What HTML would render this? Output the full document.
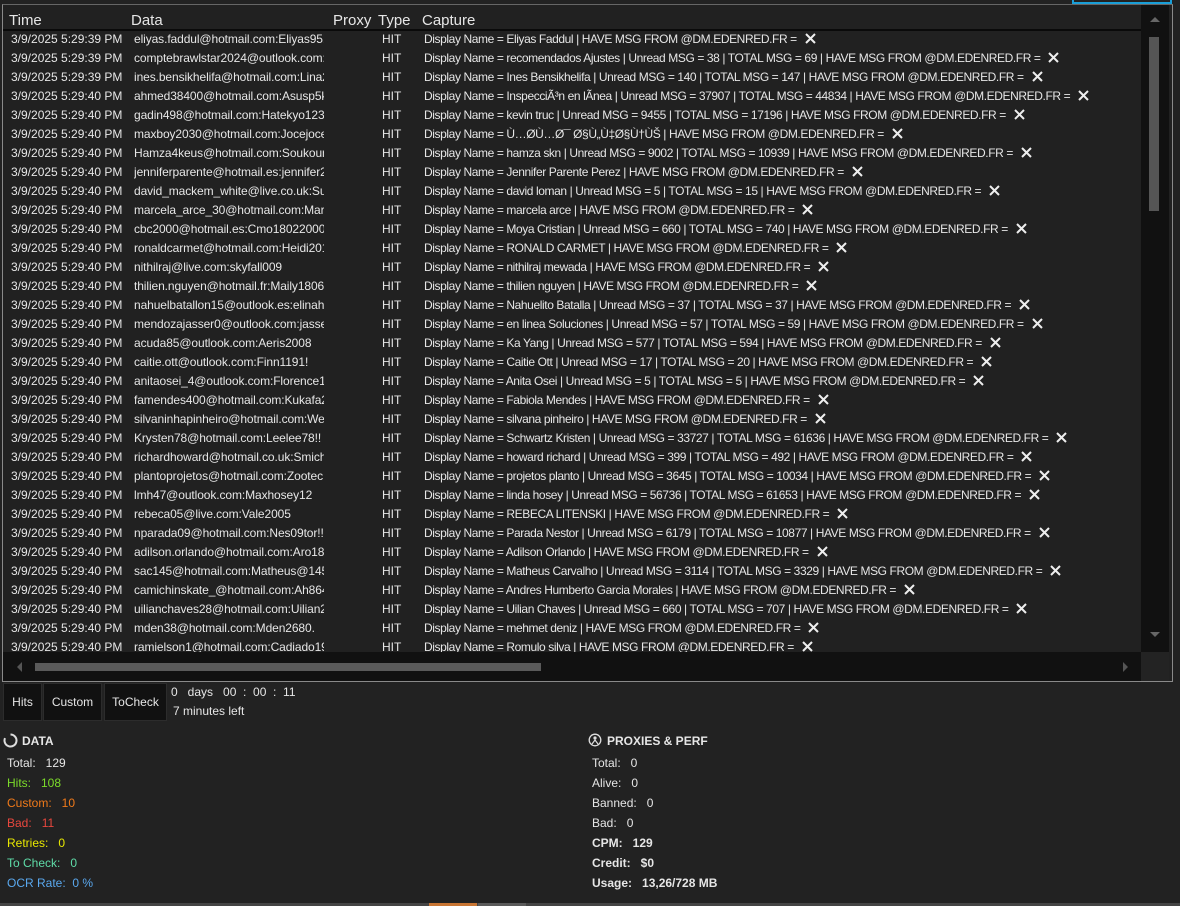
<!DOCTYPE html>
<html><head><meta charset="utf-8"><style>
*{margin:0;padding:0;box-sizing:border-box}
body{width:1180px;height:906px;background:#222;color:#e6e6e6;font-family:"Liberation Sans",sans-serif;font-size:12px;position:relative;overflow:hidden}
.abs{position:absolute;white-space:nowrap}
#grid{position:absolute;left:2px;top:4px;width:1171px;height:678px;border:1px solid #8a8a8a;border-top-color:#666;background:#212121;overflow:hidden}
.hd{position:absolute;top:7px;font-size:15px;color:#e6e6e6}
#hline{position:absolute;left:0;top:24px;width:1138px;height:2px;background:#0a0a0a}
.r{position:absolute;left:0;height:19px;width:1138px;line-height:19px}
.r span{position:absolute;top:0}
.t{left:8px}.d{left:131px;width:190px;overflow:hidden;letter-spacing:-0.1px}.y{left:379px}.c{left:421px;letter-spacing:-0.4px}
.x{display:inline-block;width:11px;height:11px;margin-left:5px;vertical-align:-1px}
#vs{position:absolute;left:1138px;top:0;width:28px;height:647px;background:#111}
#hs{position:absolute;left:0;top:647px;width:1138px;height:29px;background:#111}
.btn{position:absolute;top:683px;height:38px;background:#111;border:1px solid #2c2c2c;color:#e6e6e6;font-size:12px;line-height:36px;text-align:center}
.st{position:absolute;font-size:12px;white-space:nowrap}
.b{font-weight:bold}
</style></head><body>
<div class="abs" style="left:1072px;top:0;width:100px;height:4px;border:2px solid #1a9fd8;border-top:none"></div>
<div id="grid">
<div class="hd" style="left:6px">Time</div>
<div class="hd" style="left:128px">Data</div>
<div class="hd" style="left:330px">Proxy</div>
<div class="hd" style="left:375px">Type</div>
<div class="hd" style="left:419px">Capture</div>
<div id="hline"></div>
<div id="rows"></div>
<div id="vs">
<div style="position:absolute;left:9px;top:12px;width:0;height:0;border-left:5px solid transparent;border-right:5px solid transparent;border-bottom:5px solid #666"></div>
<div style="position:absolute;left:8px;top:32px;width:10px;height:174px;background:#555"></div>
<div style="position:absolute;left:9px;top:627px;width:0;height:0;border-left:5px solid transparent;border-right:5px solid transparent;border-top:5px solid #666"></div>
</div>
<div id="hs">
<div style="position:absolute;left:14px;top:10px;width:0;height:0;border-top:5px solid transparent;border-bottom:5px solid transparent;border-right:5px solid #555"></div>
<div style="position:absolute;left:32px;top:11px;width:506px;height:8px;background:#5a5a5a"></div>
<div style="position:absolute;left:1120px;top:10px;width:0;height:0;border-top:5px solid transparent;border-bottom:5px solid transparent;border-left:5px solid #555"></div>
</div>
<div style="position:absolute;left:1138px;top:647px;width:28px;height:29px;background:#232323"></div>
</div>
<div class="btn" style="left:3px;width:39px">Hits</div>
<div class="btn" style="left:43px;width:59px">Custom</div>
<div class="btn" style="left:104px;width:63px">ToCheck</div>
<div class="st" style="left:171px;top:685px">0&nbsp;&nbsp; days&nbsp;&nbsp; 00&nbsp; :&nbsp; 00&nbsp; :&nbsp; 11</div>
<div class="st" style="left:173px;top:704px">7 minutes left</div>
<svg class="abs" style="left:3px;top:733px" width="15" height="15" viewBox="0 0 15 15"><path d="M7.5 1.5a6 6 0 1 1-5.5 3.6" fill="none" stroke="#ddd" stroke-width="2"/></svg>
<div class="st b" style="left:22px;top:734px;color:#e6e6e6">DATA</div>
<div class="st" style="left:7px;top:756px">Total:&nbsp;&nbsp; 129</div>
<div class="st" style="left:7px;top:776px;color:#7cdb2a">Hits:&nbsp;&nbsp; 108</div>
<div class="st" style="left:7px;top:796px;color:#f07a1a">Custom:&nbsp;&nbsp; 10</div>
<div class="st" style="left:7px;top:816px;color:#e8473e">Bad:&nbsp;&nbsp; 11</div>
<div class="st" style="left:7px;top:836px;color:#e8e800">Retries:&nbsp;&nbsp; 0</div>
<div class="st" style="left:7px;top:856px;color:#5fdca8">To Check:&nbsp;&nbsp; 0</div>
<div class="st" style="left:7px;top:876px;color:#5aa8ee">OCR Rate:&nbsp; 0 %</div>
<svg class="abs" style="left:588px;top:733px" width="14" height="14" viewBox="0 0 14 14"><circle cx="7" cy="7" r="5.8" fill="none" stroke="#ddd" stroke-width="1.3"/><circle cx="7" cy="5" r="1.6" fill="#ddd"/><path d="M4 11l3-4 3 4" fill="none" stroke="#ddd" stroke-width="1.2"/></svg>
<div class="st b" style="left:607px;top:734px">PROXIES &amp; PERF</div>
<div class="st" style="left:592px;top:756px">Total:&nbsp;&nbsp; 0</div>
<div class="st" style="left:592px;top:776px">Alive:&nbsp;&nbsp; 0</div>
<div class="st" style="left:592px;top:796px">Banned:&nbsp;&nbsp; 0</div>
<div class="st" style="left:592px;top:816px">Bad:&nbsp;&nbsp; 0</div>
<div class="st b" style="left:592px;top:836px">CPM:&nbsp;&nbsp; 129</div>
<div class="st b" style="left:592px;top:856px">Credit:&nbsp;&nbsp; $0</div>
<div class="st b" style="left:592px;top:876px">Usage:&nbsp;&nbsp; 13,26/728 MB</div>
<div class="abs" style="left:0;top:903px;width:1180px;height:3px;background:#444"></div>
<div class="abs" style="left:429px;top:903px;width:48px;height:3px;background:#c87533"></div>
<div class="abs" style="left:478px;top:903px;width:48px;height:3px;background:#5a5a5a"></div>
<script>
var X='<svg class="x" viewBox="0 0 11 11"><path d="M1 1L10 10M10 1L1 10" stroke="#eee" stroke-width="2"/></svg>';
var H=' | HAVE MSG FROM @DM.EDENRED.FR = ';
var rows=[
["39","eliyas.faddul@hotmail.com:Eliyas95!!","Eliyas Faddul"],
["39","comptebrawlstar2024@outlook.com:xx","recomendados Ajustes | Unread MSG = 38 | TOTAL MSG = 69"],
["39","ines.bensikhelifa@hotmail.com:Lina2000","Ines Bensikhelifa | Unread MSG = 140 | TOTAL MSG = 147"],
["40","ahmed38400@hotmail.com:Asusp5k","Inspecci\u00c3\u00b3n en l\u00c3\u00adnea | Unread MSG = 37907 | TOTAL MSG = 44834"],
["40","gadin498@hotmail.com:Hatekyo123","kevin truc | Unread MSG = 9455 | TOTAL MSG = 17196"],
["40","maxboy2030@hotmail.com:Jocejocelyn","\u00d9\u2026\u00d8\u00d9\u2026\u00d8\u00af \u00d8\u00a7\u00d9\u201e\u00d9\u2021\u00d8\u00a7\u00d9\u2020\u00d9\u0160"],
["40","Hamza4keus@hotmail.com:Soukouna","hamza skn | Unread MSG = 9002 | TOTAL MSG = 10939"],
["40","jenniferparente@hotmail.es:jennifer2","Jennifer Parente Perez"],
["40","david_mackem_white@live.co.uk:Sunny","david loman | Unread MSG = 5 | TOTAL MSG = 15"],
["40","marcela_arce_30@hotmail.com:Marcela","marcela arce"],
["40","cbc2000@hotmail.es:Cmo18022000.","Moya Cristian | Unread MSG = 660 | TOTAL MSG = 740"],
["40","ronaldcarmet@hotmail.com:Heidi2012","RONALD CARMET"],
["40","nithilraj@live.com:skyfall009","nithilraj mewada"],
["40","thilien.nguyen@hotmail.fr:Maily1806","thilien nguyen"],
["40","nahuelbatallon15@outlook.es:elinah","Nahuelito Batalla | Unread MSG = 37 | TOTAL MSG = 37"],
["40","mendozajasser0@outlook.com:jasser","en linea Soluciones | Unread MSG = 57 | TOTAL MSG = 59"],
["40","acuda85@outlook.com:Aeris2008","Ka Yang | Unread MSG = 577 | TOTAL MSG = 594"],
["40","caitie.ott@outlook.com:Finn1191!","Caitie Ott | Unread MSG = 17 | TOTAL MSG = 20"],
["40","anitaosei_4@outlook.com:Florence1","Anita Osei | Unread MSG = 5 | TOTAL MSG = 5"],
["40","famendes400@hotmail.com:Kukafa2","Fabiola Mendes"],
["40","silvaninhapinheiro@hotmail.com:Wes","silvana pinheiro"],
["40","Krysten78@hotmail.com:Leelee78!!","Schwartz Kristen | Unread MSG = 33727 | TOTAL MSG = 61636"],
["40","richardhoward@hotmail.co.uk:Smich","howard richard | Unread MSG = 399 | TOTAL MSG = 492"],
["40","plantoprojetos@hotmail.com:Zootec","projetos planto | Unread MSG = 3645 | TOTAL MSG = 10034"],
["40","lmh47@outlook.com:Maxhosey12","linda hosey | Unread MSG = 56736 | TOTAL MSG = 61653"],
["40","rebeca05@live.com:Vale2005","REBECA LITENSKI"],
["40","nparada09@hotmail.com:Nes09tor!!","Parada Nestor | Unread MSG = 6179 | TOTAL MSG = 10877"],
["40","adilson.orlando@hotmail.com:Aro18","Adilson Orlando"],
["40","sac145@hotmail.com:Matheus@145","Matheus Carvalho | Unread MSG = 3114 | TOTAL MSG = 3329"],
["40","camichinskate_@hotmail.com:Ah864","Andres Humberto Garcia Morales"],
["40","uilianchaves28@hotmail.com:Uilian2","Uilian Chaves | Unread MSG = 660 | TOTAL MSG = 707"],
["40","mden38@hotmail.com:Mden2680.","mehmet deniz"],
["40","ramielson1@hotmail.com:Cadiado19","Romulo silva"]];
var h='';
rows.forEach(function(r,i){
h+='<div class="r" style="top:'+(25+19*i)+'px"><span class="t">3/9/2025 5:29:'+r[0]+' PM</span><span class="d">'+r[1]+'</span><span class="y">HIT</span><span class="c">Display Name = '+r[2]+H+X+'</span></div>';
});
document.getElementById('rows').innerHTML=h;
</script>
</body></html>
